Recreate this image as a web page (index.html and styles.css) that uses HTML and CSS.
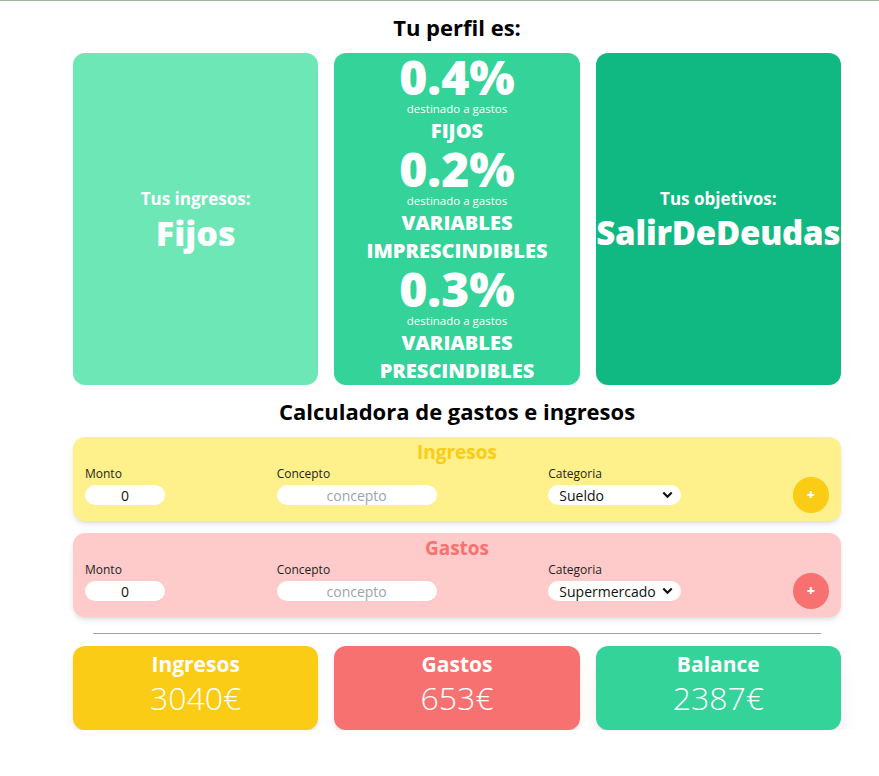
FILE: index.html
```html
<!DOCTYPE html>
<html lang="es">
<head>
<meta charset="utf-8">
<title>Perfil</title>
<link rel="stylesheet" href="styles.css">
</head>
<body>
<div class="topline"></div>
<main class="container">
  <h2 class="heading">Tu perfil es:</h2>
  <section class="profile">
    <div class="pcard pcard-1">
      <div class="plabel">Tus ingresos:</div>
      <div class="pvalue">Fijos</div>
    </div>
    <div class="pcard pcard-2">
      <div class="pct">0.4%</div>
      <div class="dest">destinado a gastos</div>
      <div class="cat">FIJOS</div>
      <div class="pct">0.2%</div>
      <div class="dest">destinado a gastos</div>
      <div class="cat">VARIABLES<br>IMPRESCINDIBLES</div>
      <div class="pct">0.3%</div>
      <div class="dest">destinado a gastos</div>
      <div class="cat">VARIABLES<br>PRESCINDIBLES</div>
    </div>
    <div class="pcard pcard-3">
      <div class="plabel">Tus objetivos:</div>
      <div class="pvalue">SalirDeDeudas</div>
    </div>
  </section>

  <h2 class="heading heading-calc">Calculadora de gastos e ingresos</h2>

  <section class="panel panel-in">
    <div class="panel-title">Ingresos</div>
    <div class="row">
      <div class="field">
        <label class="flabel">Monto</label>
        <input class="inp inp-monto" type="text" value="0">
      </div>
      <div class="field">
        <label class="flabel">Concepto</label>
        <input class="inp inp-concepto" type="text" placeholder="concepto">
      </div>
      <div class="field">
        <label class="flabel">Categoria</label>
        <div class="selwrap">
          <select class="sel"><option>Sueldo</option></select>
          <svg class="chev" width="11" height="8" viewBox="0 0 11 8"><path d="M1.3 1.5 L5.5 5.7 L9.7 1.5" fill="none" stroke="#111" stroke-width="2.2"/></svg>
        </div>
      </div>
      <button class="addbtn addbtn-in">+</button>
    </div>
  </section>

  <section class="panel panel-out">
    <div class="panel-title">Gastos</div>
    <div class="row">
      <div class="field">
        <label class="flabel">Monto</label>
        <input class="inp inp-monto" type="text" value="0">
      </div>
      <div class="field">
        <label class="flabel">Concepto</label>
        <input class="inp inp-concepto" type="text" placeholder="concepto">
      </div>
      <div class="field">
        <label class="flabel">Categoria</label>
        <div class="selwrap">
          <select class="sel"><option>Supermercado</option></select>
          <svg class="chev" width="11" height="8" viewBox="0 0 11 8"><path d="M1.3 1.5 L5.5 5.7 L9.7 1.5" fill="none" stroke="#111" stroke-width="2.2"/></svg>
        </div>
      </div>
      <button class="addbtn addbtn-out">+</button>
    </div>
  </section>

  <hr class="divider">

  <section class="totals">
    <div class="tcard tcard-in">
      <div class="ttitle">Ingresos</div>
      <div class="tvalue">3040€</div>
    </div>
    <div class="tcard tcard-out">
      <div class="ttitle">Gastos</div>
      <div class="tvalue">653€</div>
    </div>
    <div class="tcard tcard-bal">
      <div class="ttitle">Balance</div>
      <div class="tvalue">2387€</div>
    </div>
  </section>
</main>
</body>
</html>
```

FILE: styles.css
```css
* { box-sizing: border-box; }

html, body {
  margin: 0;
  padding: 0;
  background: #ffffff;
  font-family: "Open Sans", "Noto Sans", sans-serif;
  color: #111;
  overflow: hidden;
}

.topline {
  height: 1px;
  background: #9cb89c;
}

.container {
  width: 768px;
  margin-left: 73px;
}

.heading {
  margin: 12px 0;
  font-size: 22px;
  line-height: 28px;
  font-weight: 700;
  text-align: center;
  color: #000;
}

.profile {
  display: grid;
  grid-template-columns: repeat(3, minmax(0, 1fr));
  gap: 16px;
}

.pcard {
  min-width: 0;
  border-radius: 12px;
  color: #fff;
  display: flex;
  flex-direction: column;
  justify-content: center;
  align-items: center;
  text-align: center;
  white-space: nowrap;
}

.pcard-1 { background: #6ee7b7; }
.pcard-2 { background: #34d399; }
.pcard-3 { background: #10b981; }

.plabel {
  font-size: 17px;
  line-height: 28px;
  font-weight: 700;
}

.pvalue {
  font-size: 34px;
  line-height: 40px;
  font-weight: 800;
}

.pcard-3 .pvalue {
  font-size: 33px;
  letter-spacing: -0.2px;
}

.pct {
  font-size: 48px;
  line-height: 48px;
  font-weight: 800;
}

.dest {
  font-size: 11.5px;
  line-height: 16px;
}

.cat {
  font-size: 20px;
  line-height: 28px;
  font-weight: 800;
}

.panel {
  border-radius: 12px;
  padding: 1px 12px 16px;
  box-shadow: 0 4px 6px -1px rgba(0,0,0,0.1), 0 2px 4px -2px rgba(0,0,0,0.1);
  margin-bottom: 12px;
}

.panel-in { background: #fef08a; }
.panel-out { background: #fecaca; }

.panel-title {
  text-align: center;
  font-size: 19px;
  line-height: 28px;
  font-weight: 700;
}

.panel-in .panel-title { color: #facc15; }
.panel-out .panel-title { color: #f87171; }

.row {
  display: flex;
  justify-content: space-between;
  align-items: flex-end;
}

.field {
  display: flex;
  flex-direction: column;
}

.flabel {
  font-size: 12px;
  line-height: 16px;
  color: #1f1f1f;
}

.inp {
  margin-top: 3px;
  height: 20px;
  border: none;
  border-radius: 10px;
  background: #fff;
  text-align: center;
  font-family: inherit;
  font-size: 14px;
  color: #111;
  padding: 0 8px;
  outline: none;
}

.inp::placeholder { color: #9ca3af; }

.inp-monto { width: 80px; }
.inp-concepto { width: 160px; }

.selwrap {
  position: relative;
  margin-top: 3px;
}

.sel {
  appearance: none;
  -webkit-appearance: none;
  width: 133px;
  height: 20px;
  border: none;
  border-radius: 10px;
  background: #fff;
  font-family: inherit;
  font-size: 14px;
  color: #111;
  padding: 0 20px 0 11px;
  outline: none;
  display: block;
}

.chev {
  position: absolute;
  right: 8px;
  top: 6px;
  pointer-events: none;
}

.addbtn {
  width: 36px;
  height: 36px;
  border-radius: 50%;
  border: none;
  color: #fff;
  font-family: inherit;
  font-size: 14px;
  font-weight: 800;
  line-height: 36px;
  padding: 0;
  margin-bottom: -8px;
}

.addbtn-in { background: #facc15; }
.addbtn-out { background: #f87171; }

.divider {
  border: none;
  border-top: 1px solid #a3a3a3;
  margin: 16px 20px 12px;
}

.totals {
  display: grid;
  grid-template-columns: repeat(3, minmax(0, 1fr));
  gap: 16px;
}

.tcard {
  border-radius: 12px;
  color: #fff;
  text-align: center;
  padding: 4px 0 12px;
  box-shadow: 0 4px 6px -1px rgba(0,0,0,0.1), 0 2px 4px -2px rgba(0,0,0,0.1);
}

.tcard-in { background: #facc15; }
.tcard-out { background: #f87171; }
.tcard-bal {
  background: #34d399;
  box-shadow: 0 20px 25px -5px rgba(0,0,0,0.1), 0 8px 10px -6px rgba(0,0,0,0.1);
}

.ttitle {
  font-size: 21px;
  line-height: 28px;
  font-weight: 700;
}

.tvalue {
  font-size: 32px;
  line-height: 40px;
  font-weight: 300;
}
```
